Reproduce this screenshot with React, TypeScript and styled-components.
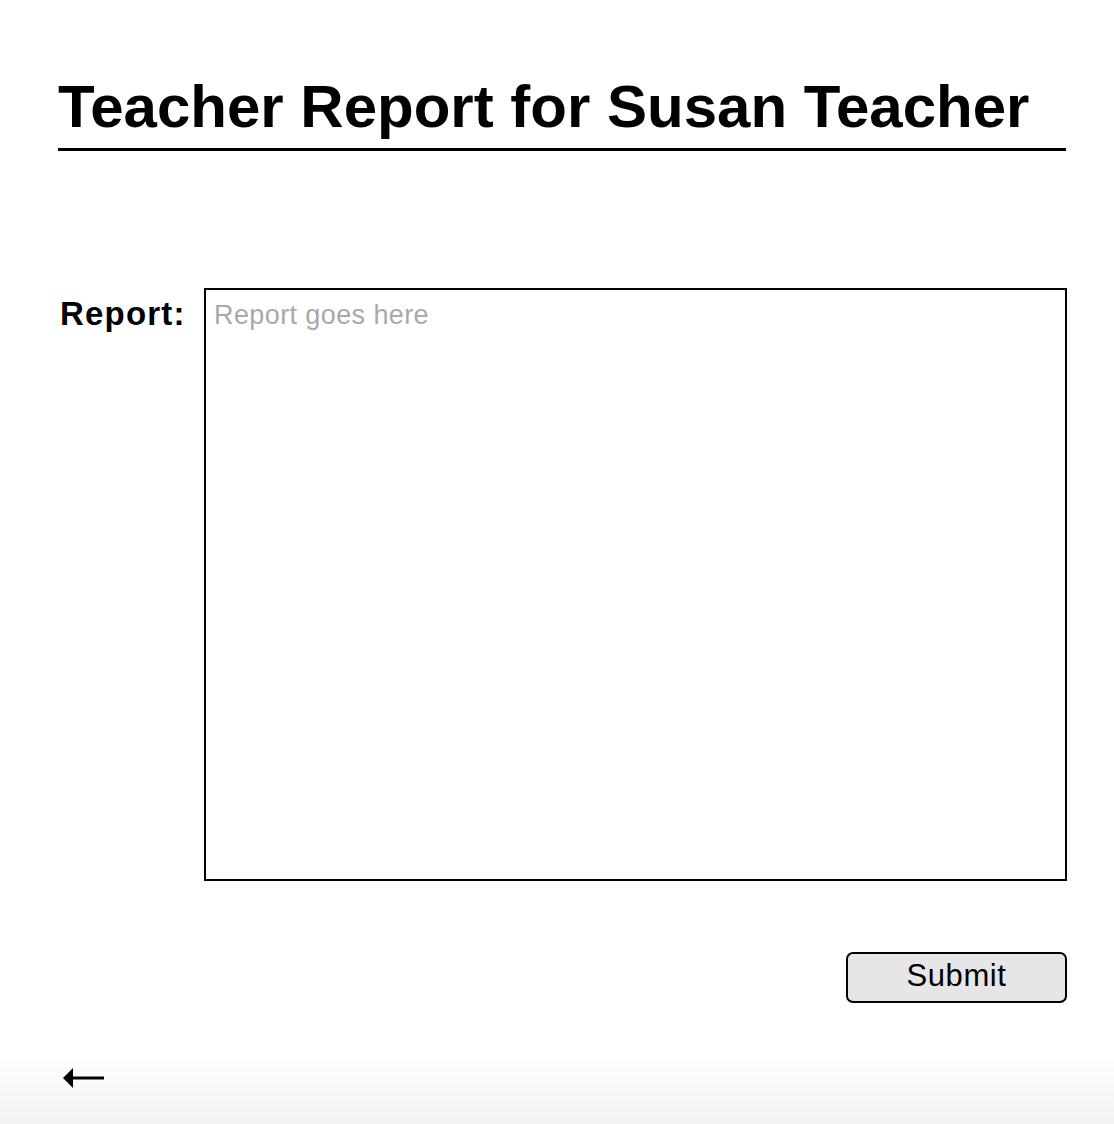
import React, { useState } from 'react';
import styled, { createGlobalStyle } from 'styled-components';

const GlobalStyle = createGlobalStyle`
  html, body {
    margin: 0;
    padding: 0;
    background: #fff;
    font-family: "Liberation Sans", Arial, Helvetica, sans-serif;
    color: #000;
  }
`;

const Page = styled.div`
  min-height: 1124px;
  display: flex;
  flex-direction: column;
`;

const Main = styled.main`
  flex: 1;
  padding: 0 47px 0 58px;
`;

const Title = styled.h1`
  margin: 72px 0 0;
  padding-bottom: 6px;
  font-size: 60px;
  line-height: 70px;
  font-weight: bold;
  border-bottom: 3px solid #000;
  width: 1008px;
`;

const Form = styled.form`
  margin-top: 137px;
  width: 1009px;
`;

const Row = styled.div`
  display: flex;
  align-items: flex-start;
`;

const Label = styled.label`
  box-sizing: border-box;
  width: 146px;
  padding-left: 2px;
  font-size: 33px;
  letter-spacing: 1.2px;
  font-weight: bold;
  line-height: 50px;
  margin-top: 1px;
`;

const TextArea = styled.textarea`
  width: 863px;
  height: 593px;
  box-sizing: border-box;
  border: 2px solid #000;
  padding: 10px 8px;
  font-family: "Liberation Sans", Arial, Helvetica, sans-serif;
  font-size: 27px;
  letter-spacing: 0.4px;
  resize: none;
  outline: none;

  &::placeholder {
    color: #a9a9a9;
  }
`;

const Actions = styled.div`
  display: flex;
  justify-content: flex-end;
  margin-top: 71px;
`;

const SubmitButton = styled.button`
  width: 221px;
  height: 51px;
  box-sizing: border-box;
  border: 2px solid #000;
  border-radius: 7px;
  background: #e6e6e6;
  font-family: "Liberation Sans", Arial, Helvetica, sans-serif;
  font-size: 31px;
  letter-spacing: 0.6px;
  color: #000;
  cursor: pointer;
  padding: 0 0 4px;
`;

const Footer = styled.footer`
  height: 84px;
  margin-top: 38px;
  padding-left: 63px;
  display: flex;
  align-items: center;
  background: linear-gradient(to bottom, #ffffff 0%, #ffffff 15%, #f2f2f2 100%);
`;

const BackLink = styled.a`
  display: block;
  width: 41px;
  height: 22px;
  margin-top: -10px;
  cursor: pointer;
`;

const App: React.FC = () => {
  const [report, setReport] = useState('');

  return (
    <Page>
      <GlobalStyle />
      <Main>
        <Title>Teacher Report for Susan Teacher</Title>
        <Form onSubmit={(e) => e.preventDefault()}>
          <Row>
            <Label htmlFor="report">Report:</Label>
            <TextArea
              id="report"
              placeholder="Report goes here"
              value={report}
              onChange={(e) => setReport(e.target.value)}
            />
          </Row>
          <Actions>
            <SubmitButton type="submit">Submit</SubmitButton>
          </Actions>
        </Form>
      </Main>
      <Footer>
        <BackLink aria-label="Back">
          <svg width="41" height="22" viewBox="0 0 41 22">
            <polygon points="0,11 10,1 10,21" fill="#000" />
            <rect x="8" y="9.5" width="33" height="3" fill="#000" />
          </svg>
        </BackLink>
      </Footer>
    </Page>
  );
};

export default App;
